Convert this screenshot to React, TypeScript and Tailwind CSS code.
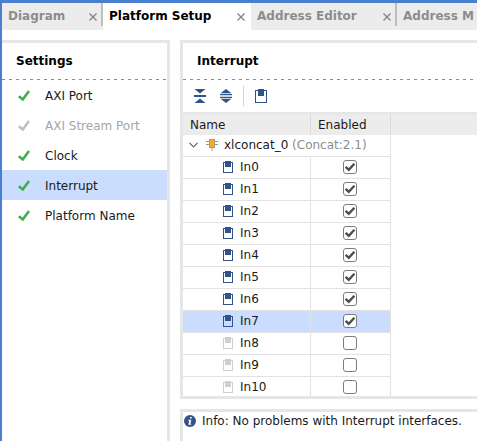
import { useState } from "react";

const TEXT = "font-['DejaVu_Sans','Noto_Sans',sans-serif] text-[12px] leading-[16px]";

function TickIcon({ className }: { className: string }) {
  return (
    <svg viewBox="0 0 12 12" className={`size-3 shrink-0 ${className}`} fill="none" stroke="currentColor" strokeWidth="2.6" aria-hidden="true">
      <path d="M0.8 6.2 L4.8 9.4 L11 1" />
    </svg>
  );
}

function CloseIcon() {
  return (
    <svg viewBox="0 0 8 8" className="size-2" fill="none" stroke="#858585" strokeWidth="1.4" aria-hidden="true">
      <path d="M0.5 0.5 L7.5 7.5 M7.5 0.5 L0.5 7.5" />
    </svg>
  );
}

function PortIcon({ className }: { className: string }) {
  return (
    <svg viewBox="0 0 10 12" className={`h-3 w-[10px] shrink-0 ${className}`} aria-hidden="true">
      <rect x="0.5" y="1.5" width="9" height="10" fill="none" stroke="currentColor" />
      <rect x="2" y="0" width="6" height="6" fill="currentColor" />
    </svg>
  );
}

function BlockIcon() {
  return (
    <svg viewBox="0 0 12 12" className="size-3 shrink-0" aria-hidden="true">
      <path d="M0 2.5 H12 M0 5.5 H12 M6 8 V12" stroke="#999999" fill="none" />
      <rect x="3.5" y="0.5" width="5" height="8" fill="#f9a825" stroke="#b09a70" />
    </svg>
  );
}

type TabProps = { label: string; active?: boolean; divider?: boolean; closable?: boolean; className: string };

function Tab({ label, active, divider, closable = true, className }: TabProps) {
  return (
    <div className={`relative flex h-[27px] items-start justify-between pl-[6px] ${active ? "bg-white text-black" : "bg-[#ececec] text-[#8c8c8c]"} ${className}`}>
      <button type="button" role="tab" aria-selected={!!active} className="pt-[5px] font-bold whitespace-nowrap">
        {label}
      </button>
      {closable && (
        <button type="button" aria-label={`Close ${label}`} className="mt-[10px] mr-[6px]">
          <CloseIcon />
        </button>
      )}
      {divider && <span className="absolute top-0 right-0 h-[23px] w-[2px] bg-[#bebebe]" />}
    </div>
  );
}

function PanelTitle({ children }: { children: string }) {
  return (
    <div>
      <h2 className="flex h-9 items-center pl-[14px] font-bold text-black">{children}</h2>
      <div className="h-px bg-[repeating-linear-gradient(90deg,#8c8c8c_0_3px,transparent_3px_7px)]" />
    </div>
  );
}

const STEPS = [
  { name: "AXI Port" },
  { name: "AXI Stream Port", disabled: true },
  { name: "Clock" },
  { name: "Interrupt", selected: true },
  { name: "Platform Name" },
];

const PORTS = Array.from({ length: 11 }, (_, i) => `In${i}`);

export default function App() {
  const [enabled, setEnabled] = useState(PORTS.map((_, i) => i < 8));
  const toggle = (i: number) => setEnabled(enabled.map((v, k) => (k === i ? !v : v)));

  return (
    <div className={`${TEXT} flex h-screen flex-col overflow-hidden border-t-[3px] border-l-2 border-[#4a7ecf] bg-white text-[#1a1a1a]`}>
      <div role="tablist" className="flex shrink-0">
        <Tab label="Diagram" divider className="w-[101px] shrink-0" />
        <Tab label="Platform Setup" active className="w-[148px] shrink-0" />
        <Tab label="Address Editor" divider className="w-[146px] shrink-0" />
        <Tab label="Address M" closable={false} className="flex-1" />
      </div>

      <div className="mt-[10px] flex min-h-0 flex-1 gap-[10px]">
        <nav className="w-[168px] shrink-0 border-t-[3px] border-r-[3px] border-[#e6e6e6]">
          <PanelTitle>Settings</PanelTitle>
          <ul>
            {STEPS.map((s) => (
              <li key={s.name}>
                <button
                  type="button"
                  disabled={s.disabled}
                  className={`flex h-[30px] w-full items-center gap-[15px] pt-[2px] pl-4 ${s.selected ? "bg-[#cbddff]" : ""} ${s.disabled ? "text-[#a6a6a6]" : ""}`}
                >
                  <TickIcon className={s.disabled ? "text-[#bfbfbf]" : "text-[#3fae49]"} />
                  {s.name}
                </button>
              </li>
            ))}
          </ul>
        </nav>

        <main className="flex min-w-0 flex-1 flex-col gap-[10px]">
          <section className="shrink-0 border-y-[3px] border-l-[3px] border-[#e6e6e6]">
            <PanelTitle>Interrupt</PanelTitle>
            <div className="flex h-8 items-center pl-[11px] text-[#31538a]">
              <button type="button" aria-label="Collapse all">
                <svg viewBox="0 0 12 14" className="h-[14px] w-3" fill="currentColor" aria-hidden="true">
                  <path d="M0.5 0 H11.5 L6 4.6 Z M0 6 H12 V8 H0 Z M0.5 14 H11.5 L6 9.4 Z" />
                </svg>
              </button>
              <button type="button" aria-label="Expand all" className="ml-[14px]">
                <svg viewBox="0 0 12 14" className="h-[14px] w-3" fill="currentColor" aria-hidden="true">
                  <path d="M0.5 4.3 H11.5 L6 0 Z M0 5 H12 V6.3 H0 Z M0 7.7 H12 V9 H0 Z M0.5 9.7 H11.5 L6 14 Z" />
                </svg>
              </button>
              <span className="ml-[11px] h-5 w-px bg-[#d4d4d4]" />
              <button type="button" aria-label="Show enabled ports" className="ml-[11px]">
                <svg viewBox="0 0 12 14" className="h-[14px] w-3" aria-hidden="true">
                  <rect x="0.5" y="1.5" width="11" height="12" fill="none" stroke="currentColor" />
                  <rect x="3" y="0" width="6" height="7" fill="currentColor" />
                </svg>
              </button>
            </div>

            <div className="border-t-2 border-[#e6e6e6] bg-[linear-gradient(#ececec_21px,white_21px)]">
              <table className="w-[208px] table-fixed border-separate border-spacing-0">
                <colgroup>
                  <col className="w-[128px]" />
                  <col className="w-[80px]" />
                </colgroup>
                <thead>
                  <tr className="h-[21px] text-left">
                    <th className="border-r border-[#dcdcdc] p-0 pl-[7px] font-normal">Name</th>
                    <th className="border-r border-[#dcdcdc] p-0 pl-[7px] font-normal">Enabled</th>
                  </tr>
                </thead>
                <tbody>
                  <tr className="h-[22px]">
                    <td colSpan={2} className="border-r border-b border-[#e2e2e2] p-0 pb-px">
                      <div className="flex items-center pl-[6px] whitespace-nowrap">
                        <svg viewBox="0 0 9 6" className="h-[6px] w-[9px]" fill="none" stroke="#666666" strokeWidth="1.2" aria-hidden="true">
                          <path d="M0.5 0.8 L4.5 4.8 L8.5 0.8" />
                        </svg>
                        <span className="ml-2 flex items-center gap-[6px]">
                          <BlockIcon />
                          <span>
                            xlconcat_0 <span className="text-[#8c8c8c]">(Concat:2.1)</span>
                          </span>
                        </span>
                      </div>
                    </td>
                  </tr>
                  {PORTS.map((port, i) => (
                    <tr key={port} className={`group h-[22px] last:h-[19px] ${port === "In7" ? "bg-[#cbddff]" : ""}`}>
                      <td className="border-r border-b border-[#e2e2e2] p-0 pb-px group-last:border-b-0 group-last:pb-0">
                        <label htmlFor={port} className="flex items-center gap-[7px] pl-10">
                          <PortIcon className={enabled[i] ? "text-[#31538a]" : "text-[#cfcfcf]"} />
                          {port}
                        </label>
                      </td>
                      <td className="border-r border-b border-[#e2e2e2] p-0 pr-px pb-px group-last:border-b-0 group-last:pb-0">
                        <span className="relative mx-auto block size-[14px]">
                          <input
                            id={port}
                            type="checkbox"
                            checked={enabled[i]}
                            onChange={() => toggle(i)}
                            className="block size-[14px] appearance-none rounded-[3px] border border-[#7c7c7c] bg-white"
                          />
                          {enabled[i] && (
                            <svg viewBox="0 0 14 14" className="pointer-events-none absolute inset-0 size-[14px]" fill="none" stroke="#4d4d4d" strokeWidth="2.4" aria-hidden="true">
                              <path d="M2.6 6.8 L5.8 9.8 L11.4 3.8" />
                            </svg>
                          )}
                        </span>
                      </td>
                    </tr>
                  ))}
                </tbody>
              </table>
            </div>
          </section>

          <section className="min-h-0 flex-1 border-t-[3px] border-l-[3px] border-[#e6e6e6]">
            <p className="flex items-center gap-[6px] pt-px pl-px whitespace-nowrap">
              <svg viewBox="0 0 12 12" className="size-3 shrink-0" aria-hidden="true">
                <circle cx="6" cy="6" r="6" fill="#31538a" />
                <path d="M6.2 2 H7.8 L7.5 3.6 H5.9 Z M4.5 4.8 H7.2 L6.4 8.8 H7.3 L7.1 9.8 H4.4 L5.2 5.8 H4.3 Z" fill="white" />
              </svg>
              Info: No problems with Interrupt interfaces.
            </p>
          </section>
        </main>
      </div>
    </div>
  );
}
